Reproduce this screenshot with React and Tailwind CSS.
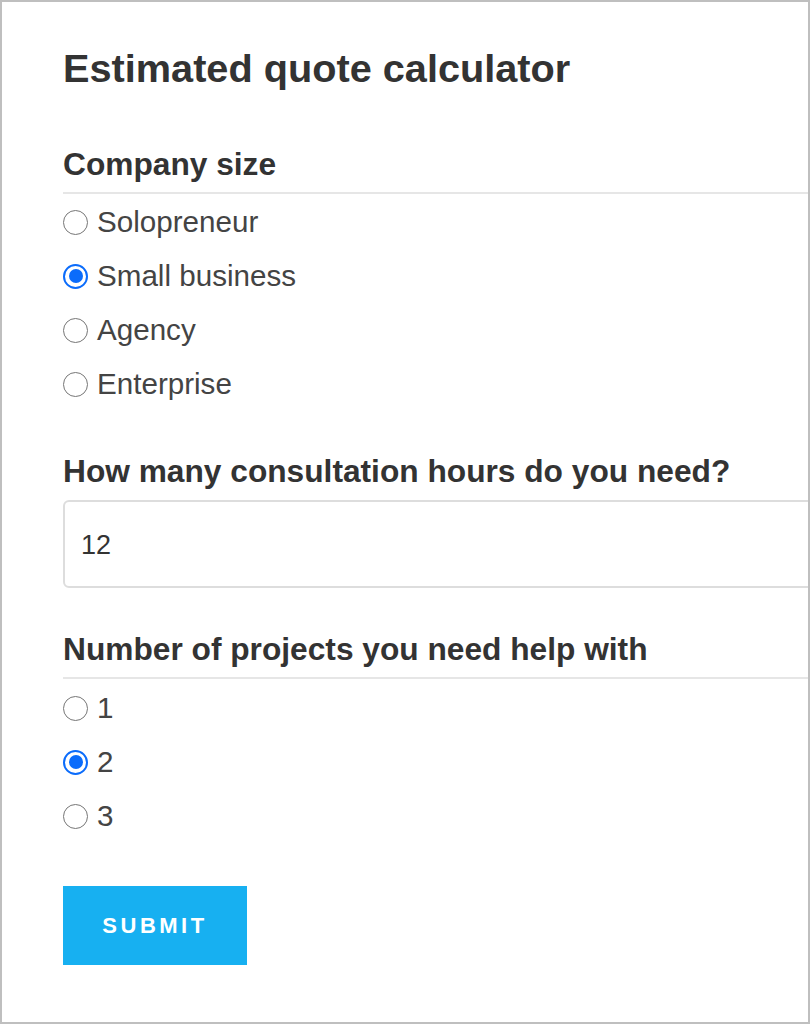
import React, { useState } from 'react'

const font = { fontFamily: '"Liberation Sans", Arial, Helvetica, sans-serif' }

// ── Radio dot drawn by hand so it looks the same in every browser ──────────
function Dot({ checked }) {
  if (checked) {
    return (
      <span className="flex h-[25px] w-[25px] shrink-0 items-center justify-center rounded-full border-[2.5px] border-[#0b6cfb] bg-white">
        <span className="h-[14px] w-[14px] rounded-full bg-[#0b6cfb]" />
      </span>
    )
  }
  return <span className="h-[25px] w-[25px] shrink-0 rounded-full border-[1.5px] border-[#767676] bg-white" />
}

function RadioGroup({ name, options, value, onChange, top = 'pt-[1px]' }) {
  return (
    <div className={top}>
      {options.map((opt) => (
        <label key={opt} className="flex h-[54px] cursor-pointer items-center">
          <input
            type="radio"
            name={name}
            value={opt}
            checked={value === opt}
            onChange={() => onChange(opt)}
            className="sr-only"
          />
          <Dot checked={value === opt} />
          <span className="ml-[9px] text-[29.6px] leading-[54px] text-[#444]">{opt}</span>
        </label>
      ))}
    </div>
  )
}

function Legend({ children, line }) {
  return (
    <div
      className={
        line
          ? 'border-b-2 border-[#e6e6e6] pb-[8px] text-[31.7px] font-bold leading-[40px] text-[#333]'
          : 'text-[31.7px] font-bold leading-[40px] text-[#333]'
      }
    >
      {children}
    </div>
  )
}

export default function App() {
  const [size, setSize] = useState('Small business')
  const [hours, setHours] = useState('12')
  const [projects, setProjects] = useState('2')

  return (
    <div style={font} className="h-[1024px] w-[810px] overflow-hidden border-2 border-[#bfbfbf] bg-white">
      <form className="w-[1000px] pl-[61px] pt-[42px]" onSubmit={(e) => e.preventDefault()}>
        <h1 className="text-[39.7px] font-bold leading-[48px] text-[#333]">Estimated quote calculator</h1>

        <div className="mt-[52px]">
          <Legend line>Company size</Legend>
          <RadioGroup
            name="size"
            options={['Solopreneur', 'Small business', 'Agency', 'Enterprise']}
            value={size}
            onChange={setSize}
          />
        </div>

        <div className="mt-[40px]">
          <Legend>How many consultation hours do you need?</Legend>
          <input
            type="text"
            value={hours}
            onChange={(e) => setHours(e.target.value)}
            className="mt-[9px] block h-[88px] w-full rounded-[6px] border-2 border-[#dddddd] px-[16px] pt-[3px] text-[27px] text-[#333] outline-none"
          />
        </div>

        <div className="mt-[41px]">
          <Legend line>Number of projects you need help with</Legend>
          <RadioGroup
            name="projects"
            options={['1', '2', '3']}
            value={projects}
            onChange={setProjects}
            top="pt-[2px]"
          />
        </div>

        <button
          type="submit"
          className="mt-[43px] block h-[79px] w-[184px] bg-[#17b0f1] text-[22px] font-bold tracking-[3.5px] text-white"
        >
          SUBMIT
        </button>
      </form>
    </div>
  )
}
